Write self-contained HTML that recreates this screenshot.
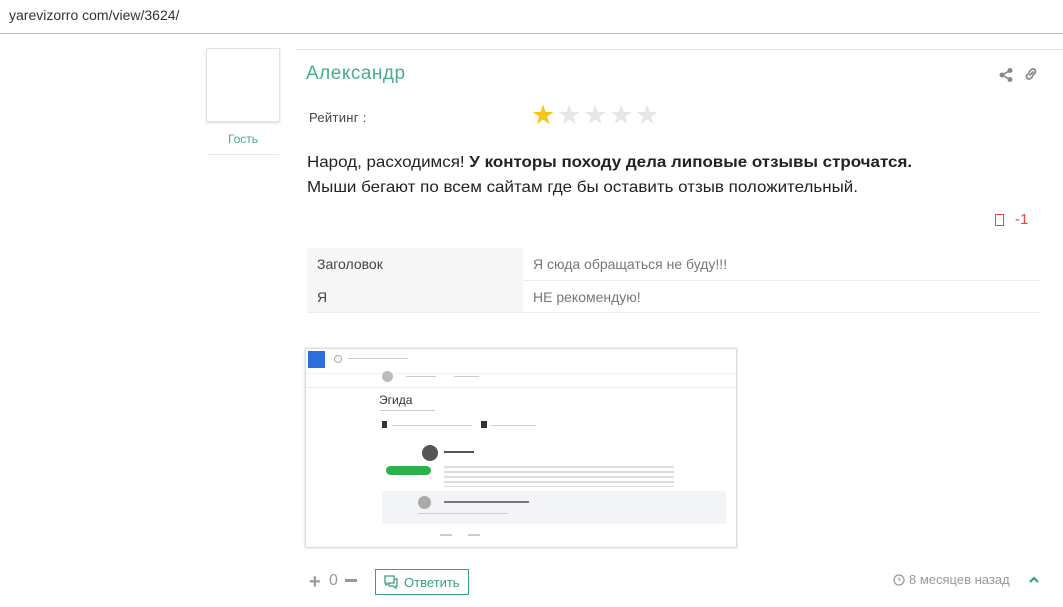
<!DOCTYPE html>
<html><head><meta charset="utf-8"><style>
*{margin:0;padding:0;box-sizing:border-box}
body{width:1063px;height:607px;background:#fff;font-family:"Liberation Sans",sans-serif;position:relative;overflow:hidden;color:#222}
.a{position:absolute;white-space:nowrap}
.star{position:absolute;top:102px;font-size:27px;line-height:27px;color:#e6e6e6}
.ln{position:absolute;height:2px;background:#ccc}
</style></head><body>
<div class="a" style="left:9px;top:7px;font-size:14px;color:#333">yarevizorro com/view/3624/</div>
<div class="a" style="left:0;top:33px;width:1063px;height:1px;background:#bbb"></div>
<div class="a" style="left:206px;top:48px;width:74px;height:74px;border:1px solid #e2e2e2;box-shadow:0 1px 2px #ddd"></div>
<div class="a" style="left:207px;top:132px;width:72px;text-align:center;font-size:12px;color:#4aa98a">Гость</div>
<div class="a" style="left:207px;top:154px;width:72px;height:1px;background:#e6e6e6"></div>
<div class="a" style="left:296px;top:49px;width:767px;height:1px;background:#e2e2e2"></div>
<div class="a" style="left:306px;top:63px;font-size:19px;color:#46ae8c;letter-spacing:0.5px">Александр</div>
<svg class="a" style="left:998px;top:67px" width="16" height="16" viewBox="0 0 16 16"><circle cx="12" cy="3.5" r="2.5" fill="#888"/><circle cx="4" cy="8" r="2.5" fill="#888"/><circle cx="12" cy="12.5" r="2.5" fill="#888"/><path d="M12 3.5L4 8L12 12.5" stroke="#888" stroke-width="1.6" fill="none"/></svg>
<svg class="a" style="left:1023px;top:66px" width="16" height="16" viewBox="0 0 16 16"><path d="M7 9l3-3M6 7l-2 2a2.5 2.5 0 0 0 3.5 3.5l2-2M10 9l2-2a2.5 2.5 0 0 0-3.5-3.5l-2 2" stroke="#888" stroke-width="1.8" fill="none" stroke-linecap="round"/></svg>
<div class="a" style="left:309px;top:110px;font-size:13px;color:#444;letter-spacing:0.3px">Рейтинг :</div>
<div class="star" style="left:531px;color:#f5c518">★</div>
<div class="star" style="left:557px">★</div>
<div class="star" style="left:583px">★</div>
<div class="star" style="left:609px">★</div>
<div class="star" style="left:635px">★</div>
<div class="a" style="left:307px;top:150px;font-size:16px;line-height:25px;color:#222;transform:scaleX(1.06);transform-origin:left">Народ, расходимся! <b>У конторы походу дела липовые отзывы строчатся.</b><br>Мыши бегают по всем сайтам где бы оставить отзыв положительный.</div>
<div class="a" style="left:995px;top:214px;width:9px;height:12px;border:1px solid #e44"></div>
<div class="a" style="left:1015px;top:211px;font-size:15px;color:#e44">-1</div>
<div class="a" style="left:307px;top:248px;width:216px;height:64px;background:#f7f7f7"></div>
<div class="a" style="left:523px;top:280px;width:517px;height:1px;background:#eee"></div>
<div class="a" style="left:307px;top:312px;width:733px;height:1px;background:#eee"></div>
<div class="a" style="left:317px;top:256px;font-size:14px;color:#444">Заголовок</div>
<div class="a" style="left:317px;top:289px;font-size:14px;color:#444">Я</div>
<div class="a" style="left:533px;top:256px;font-size:14px;color:#777">Я сюда обращаться не буду!!!</div>
<div class="a" style="left:533px;top:289px;font-size:14px;color:#777">НЕ рекомендую!</div>
<div class="a" style="left:305px;top:348px;width:432px;height:200px;border:1px solid #ddd;background:#fff;box-shadow:0 0 2px #ccc">
 <div class="a" style="left:2px;top:2px;width:17px;height:17px;background:#2a6fdb"></div>
 <div class="a" style="left:28px;top:6px;width:8px;height:8px;border:1px solid #aaa;border-radius:50%"></div>
 <div class="ln" style="left:42px;top:9px;width:60px;height:1px"></div>
 <div class="a" style="left:0;top:24px;width:430px;height:1px;background:#eee"></div>
 <div class="a" style="left:0;top:38px;width:430px;height:1px;background:#eee"></div>
 <div class="a" style="left:76px;top:22px;width:11px;height:11px;border-radius:50%;background:#bbb"></div>
 <div class="ln" style="left:100px;top:27px;width:30px;height:1px"></div>
 <div class="ln" style="left:148px;top:27px;width:25px;height:1px"></div>
 <div class="a" style="left:73px;top:44px;font-size:12px;color:#333">Эгида</div>
 <div class="ln" style="left:74px;top:61px;width:55px;height:1px"></div>
 <div class="a" style="left:76px;top:72px;width:5px;height:7px;background:#333"></div>
 <div class="ln" style="left:86px;top:76px;width:80px;height:1px"></div>
 <div class="a" style="left:175px;top:72px;width:6px;height:7px;background:#333"></div>
 <div class="ln" style="left:185px;top:76px;width:45px;height:1px"></div>
 <div class="a" style="left:116px;top:96px;width:16px;height:16px;border-radius:50%;background:#555"></div>
 <div class="a" style="left:80px;top:117px;width:45px;height:9px;border-radius:5px;background:#2bb24c"></div>
 <div class="ln" style="left:138px;top:102px;width:30px;height:2px;background:#555"></div>
 <div class="a" style="left:138px;top:114px;width:230px;height:24px;background:repeating-linear-gradient(#fff 0 3px,#ddd 3px 5px)"></div>
 <div class="a" style="left:76px;top:142px;width:344px;height:33px;background:#f2f4f7"></div>
 <div class="a" style="left:112px;top:147px;width:13px;height:13px;border-radius:50%;background:#aaa"></div>
 <div class="ln" style="left:138px;top:152px;width:85px;height:2px;background:#777"></div>
 <div class="ln" style="left:112px;top:164px;width:90px;height:1px"></div>
 <div class="ln" style="left:134px;top:185px;width:12px;height:2px"></div>
 <div class="ln" style="left:162px;top:185px;width:12px;height:2px"></div>
</div>
<div class="a" style="left:309px;top:571px;font-size:20px;color:#999;font-weight:bold">+</div>
<div class="a" style="left:329px;top:572px;font-size:16px;color:#999">0</div>
<div class="a" style="left:345px;top:579px;width:12px;height:3px;background:#999"></div>
<div class="a" style="left:375px;top:569px;width:94px;height:26px;border:1px solid #3aa07e;color:#3aa07e;font-size:13px;padding:5px 0 0 28px">Ответить</div>
<svg class="a" style="left:383px;top:574px" width="16" height="15" viewBox="0 0 16 15"><path d="M2 2h9v7H6l-3 2V9H2z M11 5h3v7h-1v2l-3-2H6v-3" stroke="#3aa07e" stroke-width="1.3" fill="none"/></svg>
<svg class="a" style="left:893px;top:574px" width="12" height="12" viewBox="0 0 12 12"><circle cx="6" cy="6" r="5" stroke="#999" fill="none" stroke-width="1.2"/><path d="M6 3v3h2" stroke="#999" fill="none"/></svg>
<div class="a" style="left:909px;top:572px;font-size:13px;color:#999">8 месяцев назад</div>
<svg class="a" style="left:1028px;top:575px" width="12" height="9" viewBox="0 0 12 9"><path d="M2 7l4-4 4 4" stroke="#2aa37c" stroke-width="2.2" fill="none"/></svg>
</body></html>
